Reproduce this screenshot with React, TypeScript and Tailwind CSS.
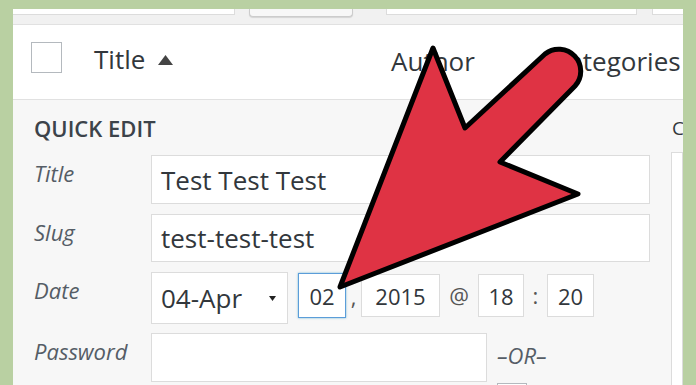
import React from 'react';

const Field: React.FC<{ className?: string; children?: React.ReactNode }> = ({ className = '', children }) => (
  <div className={`bg-white border border-[#dcdcdc] flex items-center ${className}`}>{children}</div>
);

const Label: React.FC<{ children: React.ReactNode }> = ({ children }) => (
  <div className="w-[117px] shrink-0 pt-[3px] text-[22px] leading-[30px] italic text-[#555d66]">{children}</div>
);

const Arrow: React.FC = () => (
  <svg className="absolute left-0 top-0 pointer-events-none" width="696" height="385" viewBox="0 0 696 385">
    <path
      d="M340 287 L433 48 L465 128 L545 54 A22 22 0 0 1 575 86 L500 162 L578 194 Z"
      fill="#df3344"
      stroke="#000"
      strokeWidth="5"
      strokeLinejoin="round"
    />
  </svg>
);

const App: React.FC = () => {
  return (
    <div className="relative w-[696px] h-[385px] overflow-hidden bg-[#b9d0a2] pt-[9px] px-[13px] font-['Open_Sans',sans-serif]">
      <div className="h-full bg-white flex flex-col overflow-hidden">
        {/* filter strip, mostly cut off */}
        <div className="h-[16px] shrink-0 bg-[#f1f1f1] border-b border-[#e1e1e1] flex items-start">
          <div className="w-[222px] h-[6px] bg-white border-r border-b border-[#dcdcdc]" />
          <div className="ml-[14px] w-[104px] h-[8px] bg-[#f7f7f7] border border-t-0 border-[#cccccc] rounded-b-[4px] shadow-[0_1px_1px_rgba(0,0,0,0.12)]" />
          <div className="ml-[33px] w-[251px] h-[6px] bg-white border border-t-0 border-[#dcdcdc]" />
          <div className="ml-[15px] flex-1 h-[6px] bg-white border-l border-b border-[#dcdcdc]" />
        </div>

        {/* table header */}
        <div className="h-[75px] shrink-0 border-b border-[#e1e1e1] flex items-start pl-[18px] text-[26px] leading-[36px] text-[#32373c] whitespace-nowrap">
          <div className="mt-[17px] w-[31px] h-[31px] shrink-0 border border-[#b4b9be] bg-white" />
          <div className="mt-[16px] ml-[32px] w-[297px] shrink-0 flex items-center">
            <span>Title</span>
            <svg className="ml-[13px] mt-[2px]" width="15" height="10" viewBox="0 0 15 10">
              <path d="M7.5 0 L15 10 L0 10 Z" fill="#444" />
            </svg>
          </div>
          <div className="mt-[18px] w-[161px] shrink-0">Author</div>
          <div className="mt-[18px]">Categories</div>
        </div>

        {/* quick edit panel */}
        <div className="flex-1 bg-[#f7f7f7] flex">
          <div className="w-[658px] shrink-0 pl-[21px] pr-[21px]">
            <div className="pt-[13px] text-[22px] leading-[30px] font-semibold text-[#3c434a]">QUICK EDIT</div>

            <div className="mt-[12px] flex">
              <Label>Title</Label>
              <Field className="flex-1 h-[49px] pl-[9px] text-[26px] leading-[36px] text-[#32373c]">Test Test Test</Field>
            </div>

            <div className="mt-[10px] flex">
              <Label>Slug</Label>
              <Field className="flex-1 h-[48px] pl-[9px] text-[26px] leading-[36px] text-[#32373c]">test-test-test</Field>
            </div>

            <div className="mt-[10px] flex items-start text-[22px] leading-[30px] text-[#32373c]">
              <Label>Date</Label>
              <Field className="w-[137px] h-[52px] pl-[9px] pr-[11px] justify-between text-[26px] leading-[36px]">
                <span>04-Apr</span>
                <svg width="7" height="5" viewBox="0 0 7 5">
                  <path d="M0 0 L7 0 L3.5 5 Z" fill="#222" />
                </svg>
              </Field>
              <div className="ml-[10px] mt-[1px] w-[48px] h-[45px] bg-white border border-[#5b9dd9] shadow-[0_0_2px_rgba(30,140,190,0.6)] flex items-center justify-center">02</div>
              <div className="w-[15px] mt-[9px] text-center text-[#555]">,</div>
              <Field className="mt-[2px] w-[79px] h-[43px] justify-center">2015</Field>
              <div className="w-[38px] mt-[8px] text-center text-[#555]">@</div>
              <Field className="mt-[2px] w-[46px] h-[43px] justify-center">18</Field>
              <div className="w-[23px] mt-[8px] text-center text-[#555]">:</div>
              <Field className="mt-[2px] w-[47px] h-[43px] justify-center">20</Field>
            </div>

            <div className="mt-[9px] flex items-start">
              <Label>Password</Label>
              <Field className="w-[336px] h-[49px]" />
              <div className="ml-[10px] pt-[7px] flex flex-col">
                <div className="text-[22px] leading-[30px] italic text-[#555d66]">–OR–</div>
                <div className="mt-[13px] w-[30px] h-[30px] border border-[#b4b9be] bg-white" />
              </div>
            </div>
          </div>

          <div className="flex-1 flex flex-col min-w-0">
            <div className="pt-[15px] pl-[1px] text-[19px] leading-[26px] text-[#32373c] whitespace-nowrap">Categories</div>
            <div className="mt-[11px] flex-1 bg-white border border-[#dcdcdc]" />
          </div>
        </div>
      </div>
      <Arrow />
    </div>
  );
};

export default App;
